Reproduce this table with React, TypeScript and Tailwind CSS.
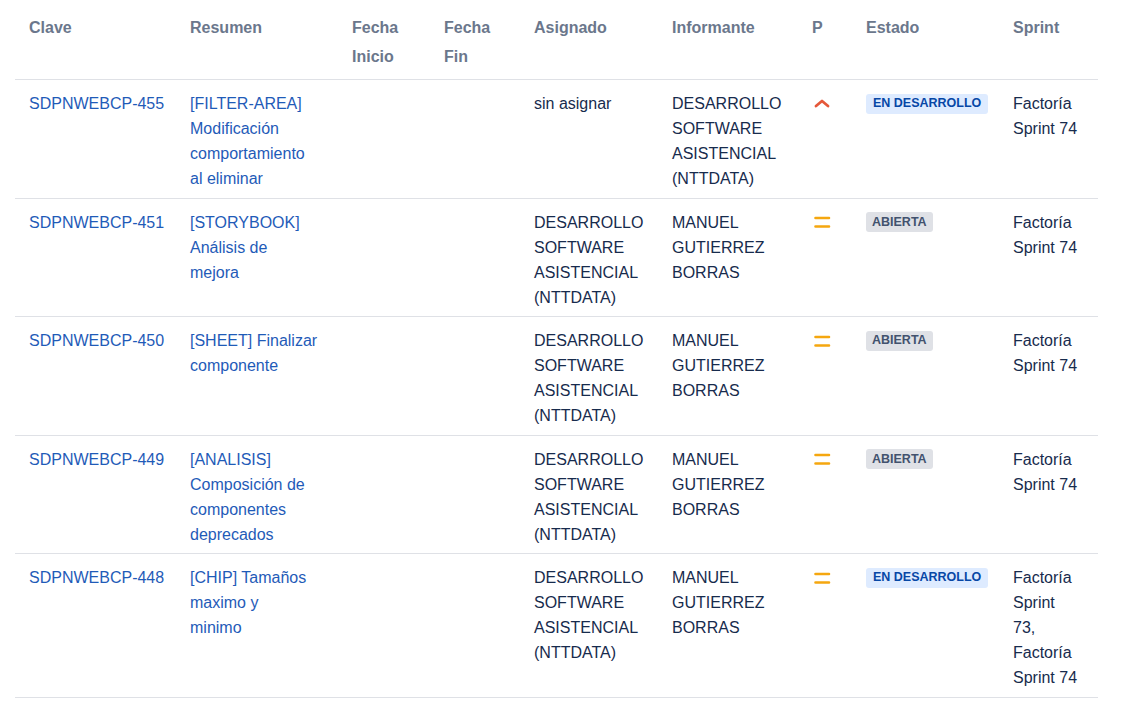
import React from "react";

type Row = {
  key: string;
  summary: string[];
  assignee: string[];
  reporter: string[];
  priority: "high" | "medium";
  status: "dev" | "open";
  sprint: string[];
};

const rows: Row[] = [
  {
    key: "SDPNWEBCP-455",
    summary: ["[FILTER-AREA]", "Modificación", "comportamiento", "al eliminar"],
    assignee: ["sin asignar"],
    reporter: ["DESARROLLO", "SOFTWARE", "ASISTENCIAL", "(NTTDATA)"],
    priority: "high",
    status: "dev",
    sprint: ["Factoría", "Sprint 74"],
  },
  {
    key: "SDPNWEBCP-451",
    summary: ["[STORYBOOK]", "Análisis de", "mejora"],
    assignee: ["DESARROLLO", "SOFTWARE", "ASISTENCIAL", "(NTTDATA)"],
    reporter: ["MANUEL", "GUTIERREZ", "BORRAS"],
    priority: "medium",
    status: "open",
    sprint: ["Factoría", "Sprint 74"],
  },
  {
    key: "SDPNWEBCP-450",
    summary: ["[SHEET] Finalizar", "componente"],
    assignee: ["DESARROLLO", "SOFTWARE", "ASISTENCIAL", "(NTTDATA)"],
    reporter: ["MANUEL", "GUTIERREZ", "BORRAS"],
    priority: "medium",
    status: "open",
    sprint: ["Factoría", "Sprint 74"],
  },
  {
    key: "SDPNWEBCP-449",
    summary: ["[ANALISIS]", "Composición de", "componentes", "deprecados"],
    assignee: ["DESARROLLO", "SOFTWARE", "ASISTENCIAL", "(NTTDATA)"],
    reporter: ["MANUEL", "GUTIERREZ", "BORRAS"],
    priority: "medium",
    status: "open",
    sprint: ["Factoría", "Sprint 74"],
  },
  {
    key: "SDPNWEBCP-448",
    summary: ["[CHIP] Tamaños", "maximo y", "minimo"],
    assignee: ["DESARROLLO", "SOFTWARE", "ASISTENCIAL", "(NTTDATA)"],
    reporter: ["MANUEL", "GUTIERREZ", "BORRAS"],
    priority: "medium",
    status: "dev",
    sprint: ["Factoría", "Sprint", "73,", "Factoría", "Sprint 74"],
  },
];

const grid =
  "grid grid-cols-[161px_162px_92px_90px_138px_140px_54px_147px_99px]";

function Lines({ lines }: { lines: string[] }) {
  return (
    <>
      {lines.map((l, i) => (
        <div key={i} className="whitespace-nowrap">
          {l}
        </div>
      ))}
    </>
  );
}

function Priority({ p }: { p: "high" | "medium" }) {
  if (p === "high") {
    return (
      <div className="flex h-[25px] items-center pl-[1px]">
        <svg width="18" height="16" viewBox="0 0 18 16">
          <path
            d="M3 10 L9 5 L15 10"
            fill="none"
            stroke="#e5583a"
            strokeWidth="2.8"
            strokeLinecap="round"
            strokeLinejoin="round"
          />
        </svg>
      </div>
    );
  }
  return (
    <div className="flex h-[25px] items-center pl-[1px]">
      <svg width="18" height="16" viewBox="0 0 18 16">
        <path
          d="M2.5 4 H16 M2.5 12.5 H16"
          fill="none"
          stroke="#f5a70f"
          strokeWidth="2.6"
          strokeLinecap="round"
        />
      </svg>
    </div>
  );
}

function Status({ s }: { s: "dev" | "open" }) {
  return (
    <div className="flex h-[25px] items-center">
      {s === "dev" ? (
        <span className="inline-flex h-[20px] items-center rounded-[3px] bg-[#deebff] px-[7px] text-[12.5px] font-bold leading-none text-[#0747a6]">
          EN DESARROLLO
        </span>
      ) : (
        <span className="inline-flex h-[20px] items-center rounded-[3px] bg-[#dfe1e6] px-[6px] text-[12.5px] font-bold leading-none text-[#42526e]">
          ABIERTA
        </span>
      )}
    </div>
  );
}

export default function App() {
  return (
    <div
      className="min-h-[703px] w-[1127px] bg-white"
      style={{ fontFamily: '"Liberation Sans", Arial, sans-serif' }}
    >
      <div className="ml-[15px] w-[1083px]">
        <div
          className={`${grid} border-b border-[#dfe1e6] pb-[8px] pt-[13px] text-[16px] font-semibold leading-[29px] text-[#6b778c]`}
        >
          <div className="pl-[14px]">Clave</div>
          <div className="pl-[14px]">Resumen</div>
          <div className="pl-[14px]">
            <div>Fecha</div>
            <div>Inicio</div>
          </div>
          <div className="pl-[14px]">
            <div>Fecha</div>
            <div>Fin</div>
          </div>
          <div className="pl-[14px]">Asignado</div>
          <div className="pl-[14px]">Informante</div>
          <div className="pl-[14px]">P</div>
          <div className="pl-[14px]">Estado</div>
          <div className="pl-[14px]">Sprint</div>
        </div>
        {rows.map((r) => (
          <div
            key={r.key}
            className={`${grid} border-b border-[#dfe1e6] pb-[6.5px] pt-[11px] text-[16px] leading-[25px] text-[#172b4d]`}
          >
            <div className="pl-[14px] text-[#1f5bb8]">{r.key}</div>
            <div className="pl-[14px] text-[#1f5bb8]">
              <Lines lines={r.summary} />
            </div>
            <div className="pl-[14px]"></div>
            <div className="pl-[14px]"></div>
            <div className="pl-[14px]">
              <Lines lines={r.assignee} />
            </div>
            <div className="pl-[14px]">
              <Lines lines={r.reporter} />
            </div>
            <div className="pl-[14px]">
              <Priority p={r.priority} />
            </div>
            <div className="pl-[14px]">
              <Status s={r.status} />
            </div>
            <div className="pl-[14px]">
              <Lines lines={r.sprint} />
            </div>
          </div>
        ))}
      </div>
    </div>
  );
}
